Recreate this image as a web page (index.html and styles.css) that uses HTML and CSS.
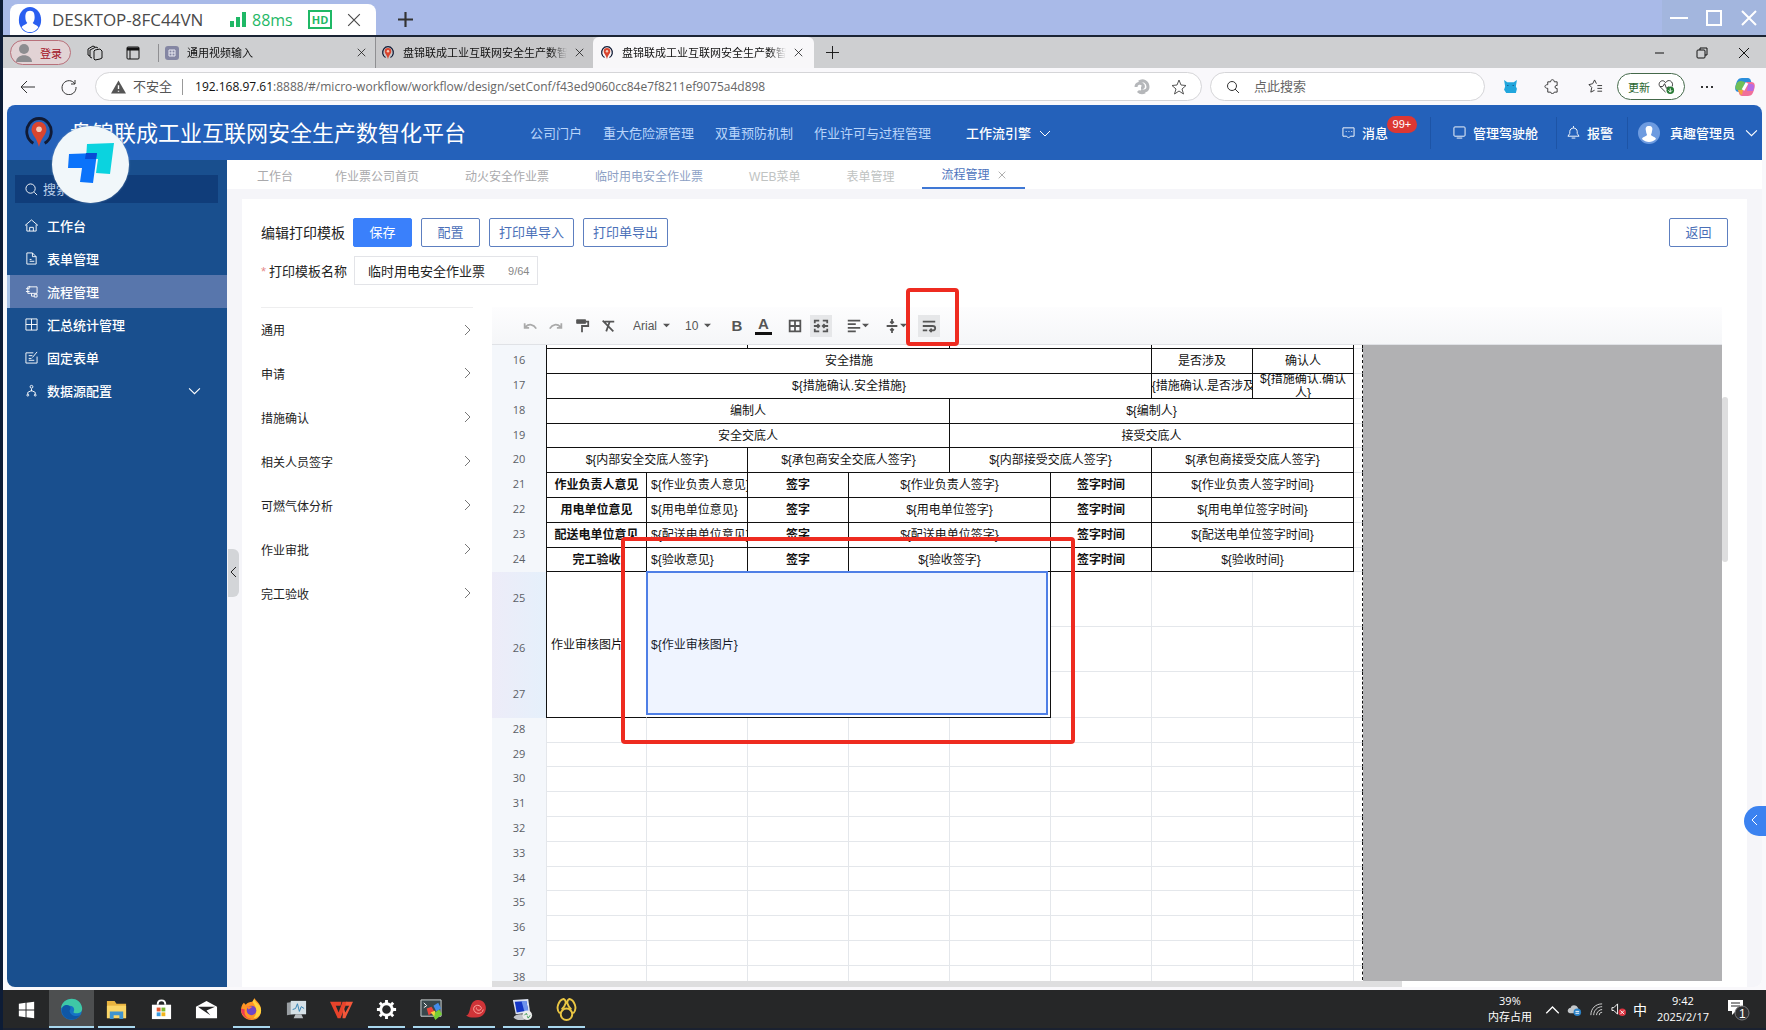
FILE: index.html
```html
<!DOCTYPE html>
<html lang="zh">
<head>
    <meta charset="UTF-8">
    <meta name="viewport" content="width=device-width, initial-scale=1.0">
    <title>盘锦联成工业互联网安全生产数智化平台</title>
    <link rel="stylesheet" href="styles.css">
</head>
<body>
    <svg class="sprite" aria-hidden="true">
        <symbol id="close" viewBox="0 0 12 12"><path d="M1 1l10 10M11 1L1 11"/></symbol>
        <symbol id="plus" viewBox="0 0 14 14"><path d="M7 0v14M0 7h14"/></symbol>
        <symbol id="down" viewBox="0 0 12 12"><path d="M1 4l5 5 5-5"/></symbol>
        <symbol id="right" viewBox="0 0 12 12"><path d="M4 1l5 5-5 5"/></symbol>
        <symbol id="caret" viewBox="0 0 8 8"><path d="M0 2h8L4 6z" fill="currentColor" stroke="none"/></symbol>
        <symbol id="pin" viewBox="0 0 28 34">
            <path d="M8 28A13 14 0 1 1 20 28" stroke="#101a35" stroke-width="3"/>
            <path d="M14 5a8 8 0 0 1 8 8c0 6-6 9-8 19-2-10-8-13-8-19a8 8 0 0 1 8-8z" fill="#d9452f" stroke="none"/>
            <circle cx="14" cy="13" r="3" fill="#f6c9b8" stroke="none"/>
        </symbol>
    </svg>

    <!-- 远程桌面窗口 -->
    <header class="remote-bar">
        <div class="remote-tab">
            <svg class="remote-user" viewBox="0 0 26 28"><ellipse cx="13" cy="14" rx="12" ry="14" fill="#2a5ff0" stroke="none"/><path d="M13 4c4 0 5 3 5 7 0 3-1 5-2 6 0 2 5 2 6 5-3 4-6 5-9 5s-6-1-9-5c1-3 6-3 6-5-1-1-2-3-2-6 0-4 1-7 5-7z" fill="#fff" stroke="none"/></svg>
            <span class="remote-name">DESKTOP-8FC44VN</span>
            <svg class="signal" viewBox="0 0 16 15"><path d="M0 9h4v6H0zM6 5h4v10H6zM12 0h4v15h-4z" fill="#1fb866" stroke="none"/></svg>
            <span class="ping">88ms</span>
            <span class="hd">HD</span>
            <svg class="remote-close"><use href="#close"/></svg>
        </div>
        <svg class="remote-add"><use href="#plus"/></svg>
        <div class="remote-controls">
            <svg viewBox="0 0 18 18"><path d="M0 9h18"/></svg>
            <svg viewBox="0 0 18 18"><path d="M2 2h14v14H2z"/></svg>
            <svg viewBox="0 0 18 18"><path d="M2 2l14 14M16 2L2 16"/></svg>
        </div>
    </header>

    <!-- 浏览器标签 -->
    <div class="browser-tabs">
        <button class="login"><svg viewBox="0 0 16 18"><circle cx="8" cy="5" r="5" fill="#8d8d90" stroke="none"/><path d="M0 18c0-9 16-9 16 0z" fill="#8d8d90" stroke="none"/></svg>登录</button>
        <svg class="b-icon spaces" viewBox="0 0 16 16"><path d="M8 5l5-1 2 2v7l-2 1-5 1-1-1V6z"/><path d="M5 13l-2-1V5l6-3 2 1M3 11l-2-1V4l5-3 2 1"/></svg>
        <svg class="b-icon side" viewBox="0 0 16 16"><rect x="2" y="2" width="12" height="12" rx="1"/><path d="M2 4h12" stroke-width="3"/><path d="M5 5v9"/></svg>
        <div class="b-tab first">
            <svg class="fav" viewBox="0 0 14 14"><rect width="14" height="14" rx="3" fill="#8486a3" stroke="none"/><path d="M4 4h6v6H4zM7 4v6M4 7h6" stroke="#e9e9f2"/></svg>
            <span>通用视频输入</span><svg class="x"><use href="#close"/></svg>
        </div>
        <div class="b-tab second">
            <svg class="fav"><use href="#pin"/></svg>
            <span>盘锦联成工业互联网安全生产数智化平台</span><svg class="x"><use href="#close"/></svg>
        </div>
        <div class="b-tab current">
            <svg class="fav"><use href="#pin"/></svg>
            <span>盘锦联成工业互联网安全生产数智化平台</span><svg class="x"><use href="#close"/></svg>
        </div>
        <svg class="b-add"><use href="#plus"/></svg>
        <div class="b-controls">
            <svg viewBox="0 0 12 12"><path d="M1 6h9"/></svg>
            <svg viewBox="0 0 12 12"><rect x="1" y="3" width="8" height="8" rx="1"/><path d="M4 3V1h7v7H9"/></svg>
            <svg viewBox="0 0 12 12"><path d="M1 1l10 10M11 1L1 11"/></svg>
        </div>
    </div>

    <!-- 地址栏 -->
    <div class="address-row">
        <svg class="nav-icon back" viewBox="0 0 16 16"><path d="M15 8H1M7 2L1 8l6 6"/></svg>
        <svg class="nav-icon" viewBox="0 0 16 16"><path d="M14 5A7 7 0 1 0 15 8M14 1v4h-4"/></svg>
        <div class="url-box">
            <svg class="warn" viewBox="0 0 16 14"><path d="M8 0l8 14H0z" fill="#555" stroke="none"/><path d="M8 5v4M8 11v1" stroke="#fff" stroke-width="1.500"/></svg>
            <span class="unsafe">不安全</span>
            <div class="url" role="textbox" aria-label="地址" contenteditable="true" spellcheck="false"><b>192.168.97.61</b>:8888/#/micro-workflow/workflow/design/setConf/f43ed9060cc84e7f8211ef9075a4d898</div>
            <svg class="swirl" viewBox="0 0 16 16"><path d="M2 8c0-4 5-5 7-2 1 2 0 3-2 3M5 3c4-3 9 0 9 5 0 4-5 5-7 3M11 13c-2 1-5 1-7-1" stroke="#b5b7ba" stroke-width="3"/></svg>
            <svg class="star" viewBox="0 0 16 16"><path d="M8 1l2 5 5 .5-4 3.500 1.500 5L8 12l-4.500 3L5 10 1 6.500 6 6z"/></svg>
        </div>
        <label class="quick-search">
            <svg viewBox="0 0 14 14"><circle cx="6" cy="6" r="4.500"/><path d="M9 9l4 4"/></svg>
            <input type="text" placeholder="点此搜索" aria-label="点此搜索">
        </label>
        <svg class="ext" viewBox="0 0 14 14"><path d="M1 1l3 2h6l3-2-1 6 1 2-1 4H3L1 10l1-3z" fill="#21a6dd" stroke="none"/><path d="M4 6h1M9 6h1" stroke="#174b7a"/></svg>
        <svg class="ext" viewBox="0 0 16 16"><path d="M4 3h3c0-3 4-3 4 0h3v4c-3-1-3 4 0 3v4h-3c0 2-4 2-4 0H4v-4c-4 0-4-4 0-4z"/></svg>
        <svg class="ext split" viewBox="0 0 16 16"><path d="M9 5L7 1 5 5 1 6l3 3-1 5 4-2M10 7h5M10 10h5M10 13h5"/></svg>
        <button class="update">更新<svg viewBox="0 0 18 18"><path d="M8 15L2 9c-3-4 3-9 6-4 3-5 9-1 7 4M2 9h3l2-3 2 5 2-2"/><circle cx="13" cy="13" r="4" fill="#287a35" stroke="none"/><path d="M13 11v4M11 13l2 2 2-2" stroke="#fff"/></svg></button>
        <svg class="dots" viewBox="0 0 14 4"><path d="M1 2h2M6 2h2M11 2h2" stroke-width="2"/></svg>
        <svg class="copilot" viewBox="0 0 22 22"><path d="M8 2h6c3 0 3 4 4 6h-5l-3 8H5c-5 0-4-5-3-8s2-6 6-6z" fill="#2b8edb" stroke="none"/><path d="M2 9c1-3 2-4 5-4l4 1-2 8H4c-3 0-3-3-2-5z" fill="#70bf57" stroke="none"/><path d="M14 20H8c-3 0-3-4-4-6h5l3-8h5c5 0 4 5 3 8s-2 6-6 6z" fill="#f0709a" stroke="none"/><path d="M14 8h4c3 1 2 4 1 7h-6z" fill="#b76be3" stroke="none"/><path d="M4 14h5l-1 5c-2-1-3-2-4-5z" fill="#f3a53c" stroke="none"/><path d="M9 14l4-7" stroke="#fff" stroke-width="3"/></svg>
    </div>

    <main class="app">
        <div class="app-header">
            <svg class="app-logo"><use href="#pin"/></svg>
            <h1>盘锦联成工业互联网安全生产数智化平台</h1>
            <nav class="top-nav">
                <a href="#">公司门户</a>
                <a href="#">重大危险源管理</a>
                <a href="#">双重预防机制</a>
                <a href="#">作业许可与过程管理</a>
                <a href="#" class="on">工作流引擎<svg><use href="#down"/></svg></a>
            </nav>
            <div class="user-nav">
                <a href="#" class="msg"><svg viewBox="0 0 14 14"><path d="M1 2h12v9H9l-2 2-2-2H1zM4 6h1M7 6h1M10 6h1"/></svg>消息<em>99+</em></a>
                <a href="#" class="cockpit"><svg viewBox="0 0 14 14"><rect x="1" y="1" width="12" height="10" rx="1"/><path d="M4 13h6"/></svg>管理驾驶舱</a>
                <a href="#" class="alarm"><svg viewBox="0 0 14 14"><path d="M1 11h12L11 8V6c0-5-8-5-8 0v2zM5 13h4M7 0v2"/></svg>报警</a>
                <a href="#" class="admin"><svg class="face" viewBox="0 0 22 22"><circle cx="11" cy="11" r="11" fill="#6d9be0" stroke="none"/><path d="M11 4c3 0 4 2 3 5 0 2-1 3-1 4 1 2 4 1 5 4-4 4-10 4-14 0 1-3 4-2 5-4 0-1-1-2-1-4-1-3 0-5 3-5z" fill="#fff" stroke="none"/></svg>真趣管理员<svg><use href="#down"/></svg></a>
            </div>
        </div>

        <div class="app-body">
            <aside class="sidebar">
                <label class="side-search"><svg viewBox="0 0 14 14"><circle cx="6" cy="6" r="5"/><path d="M10 10l3 3"/></svg><input type="text" placeholder="搜索" aria-label="搜索"></label>
                <a href="#"><svg viewBox="0 0 14 14"><path d="M0 7l7-6 7 6M2 6v7h10V6M5 13V9h4v4"/></svg>工作台</a>
                <a href="#"><svg viewBox="0 0 14 14"><path d="M2 1h6l4 4v8H2zM8 1v4h4M5 8h2M5 10h5"/></svg>表单管理</a>
                <a href="#" class="on"><svg viewBox="0 0 14 14"><path d="M3 2h10v7H3zM1 4h4M1 7h4M7 9v3h3M5 1v2M10 10h3v3h-3z"/></svg>流程管理</a>
                <a href="#"><svg viewBox="0 0 14 14"><path d="M1 1h12v12H1zM7 1v12M1 7h12"/></svg>汇总统计管理</a>
                <a href="#"><svg viewBox="0 0 14 14"><path d="M9 2H1v11h12V6M4 5h4M4 8h3M4 10h6M8 7l5-6"/></svg>固定表单</a>
                <a href="#"><svg viewBox="0 0 14 14"><circle cx="7" cy="3" r="1.500"/><path d="M7 5v3M3 11V9l4-2 4 2v2"/><circle cx="3" cy="12" r="1"/><circle cx="11" cy="12" r="1"/></svg>数据源配置<svg class="more"><use href="#down"/></svg></a>
            </aside>

            <div class="work">
                <nav class="page-tabs">
                    <a href="#" class="home">工作台</a>
                    <a href="#">作业票公司首页</a>
                    <a href="#">动火安全作业票</a>
                    <a href="#" class="visited">临时用电安全作业票</a>
                    <a href="#" class="faded">WEB菜单</a>
                    <a href="#" class="faded">表单管理</a>
                    <a href="#" class="on">流程管理<svg><use href="#close"/></svg></a>
                </nav>

                <div class="panel-wrap">
                    <button class="fold" aria-label="收起"><svg viewBox="0 0 12 12"><path d="M8 1L3 6l5 5"/></svg></button>
                    <section class="panel">
                        <div class="actions">
                            <h2>编辑打印模板</h2>
                            <button class="btn primary">保存</button>
                            <button class="btn">配置</button>
                            <button class="btn">打印单导入</button>
                            <button class="btn">打印单导出</button>
                            <button class="btn return">返回</button>
                        </div>
                        <div class="name-row">
                            <label for="tplName"><i>*</i>打印模板名称</label>
                            <div class="name-box"><input type="text" id="tplName" value="临时用电安全作业票"><span>9/64</span></div>
                        </div>

                        <div class="editor">
                            <div class="fields">
                                <button>通用<svg><use href="#right"/></svg></button>
                                <button>申请<svg><use href="#right"/></svg></button>
                                <button>措施确认<svg><use href="#right"/></svg></button>
                                <button>相关人员签字<svg><use href="#right"/></svg></button>
                                <button>可燃气体分析<svg><use href="#right"/></svg></button>
                                <button>作业审批<svg><use href="#right"/></svg></button>
                                <button>完工验收<svg><use href="#right"/></svg></button>
                            </div>

                            <div class="sheet">
                                <div class="toolbar">
                                    <button class="dim" aria-label="撤销"><svg viewBox="0 0 18 18"><path d="M3 6v5h5M4 10c4-4 9-3 12 2" stroke-width="2"/></svg></button>
                                    <button class="dim" aria-label="重做"><svg viewBox="0 0 18 18"><path d="M15 6v5h-5M14 10C10 6 5 7 2 12" stroke-width="2"/></svg></button>
                                    <button aria-label="格式刷"><svg viewBox="0 0 18 18"><path d="M3 2h10v4H3z" fill="#555"/><path d="M13 4h3v5H9v7" stroke-width="2"/></svg></button>
                                    <button aria-label="清除格式"><svg viewBox="0 0 18 18"><path d="M5 4h11M11 4L7 15M3 3l12 12" stroke-width="2"/></svg></button>
                                    <label class="drop font"><select aria-label="字体"><option>Arial</option></select><svg><use href="#caret"/></svg></label>
                                    <label class="drop size"><select aria-label="字号"><option>10</option></select><svg><use href="#caret"/></svg></label>
                                    <button class="bold" aria-label="加粗">B</button>
                                    <button class="color" aria-label="文字颜色">A</button>
                                    <button class="border-btn" aria-label="边框"><svg viewBox="0 0 18 18"><path d="M3 3h12v12H3zM9 3v12M3 9h12" stroke-width="2"/></svg></button>
                                    <button class="pressed" aria-label="合并"><svg viewBox="0 0 18 18"><path d="M7 3H2v3M11 3h5v3M7 15H2v-3M11 15h5v-3M1 9h6M17 9h-6M5 7l2 2-2 2M13 7l-2 2 2 2" stroke-width="2"/></svg></button>
                                    <button class="align" aria-label="水平对齐"><svg viewBox="0 0 18 18"><path d="M2 3h14M2 7h9M2 11h14M2 15h9" stroke-width="2"/></svg><svg class="tri"><use href="#caret"/></svg></button>
                                    <button class="valign" aria-label="垂直对齐"><svg viewBox="0 0 18 18"><path d="M3 9h12M9 1v4M9 17v-4M7 4l2 2 2-2M7 14l2-2 2 2" stroke-width="2"/></svg><svg class="tri"><use href="#caret"/></svg></button>
                                    <button class="pressed wrap" aria-label="自动换行"><svg viewBox="0 0 18 18"><path d="M2 4h14M2 9h11c4 0 4 5 0 5h-3M2 14h5M12 12l-2 2 2 2" stroke-width="2"/></svg></button>
                                    <div class="mark mark-tool"></div>
                                </div>

                                <div class="grid">
                                    <table>
                                        <colgroup><col class="c-num"><col class="c-thin"><col class="c-wide"><col class="c-wide"><col class="c-wide"><col class="c-wide"><col class="c-wide"><col class="c-wide"><col class="c-wide"><col class="c-end"></colgroup>
                                        <tbody>
                                            <tr class="cut"><th></th><td colspan="2"></td><td colspan="2"></td><td colspan="2"></td><td colspan="2"></td><td class="end"></td></tr>
                                            <tr class="ink"><th>16</th><td colspan="6">安全措施</td><td>是否涉及</td><td>确认人</td><td class="end"></td></tr>
                                            <tr class="ink"><th>17</th><td colspan="6">${措施确认.安全措施}</td><td><div class="clip one">${措施确认.是否涉及}</div></td><td><div class="clip">${措施确认.确认人}</div></td><td class="end"></td></tr>
                                            <tr class="ink"><th>18</th><td colspan="4">编制人</td><td colspan="4">${编制人}</td><td class="end"></td></tr>
                                            <tr class="ink"><th>19</th><td colspan="4">安全交底人</td><td colspan="4">接受交底人</td><td class="end"></td></tr>
                                            <tr class="ink"><th>20</th><td colspan="2">${内部安全交底人签字}</td><td colspan="2">${承包商安全交底人签字}</td><td colspan="2">${内部接受交底人签字}</td><td colspan="2">${承包商接受交底人签字}</td><td class="end"></td></tr>
                                            <tr class="ink"><th>21</th><td class="b">作业负责人意见</td><td class="l">${作业负责人意见}</td><td class="b">签字</td><td colspan="2">${作业负责人签字}</td><td class="b">签字时间</td><td colspan="2">${作业负责人签字时间}</td><td class="end"></td></tr>
                                            <tr class="ink"><th>22</th><td class="b">用电单位意见</td><td class="l">${用电单位意见}</td><td class="b">签字</td><td colspan="2">${用电单位签字}</td><td class="b">签字时间</td><td colspan="2">${用电单位签字时间}</td><td class="end"></td></tr>
                                            <tr class="ink"><th>23</th><td class="b">配送电单位意见</td><td class="l">${配送电单位意见}</td><td class="b">签字</td><td colspan="2">${配送电单位签字}</td><td class="b">签字时间</td><td colspan="2">${配送电单位签字时间}</td><td class="end"></td></tr>
                                            <tr class="ink"><th>24</th><td class="b">完工验收</td><td class="l">${验收意见}</td><td class="b">签字</td><td colspan="2">${验收签字}</td><td class="b">签字时间</td><td colspan="2">${验收时间}</td><td class="end"></td></tr>
                                            <tr class="picked tall"><th>25</th><td class="l dark title" rowspan="3">作业审核图片</td><td class="l dark chosen" colspan="4" rowspan="3">${作业审核图片}<div class="selection"></div></td><td></td><td></td><td></td><td class="end"></td></tr>
                                            <tr class="picked mid"><th>26</th><td></td><td></td><td></td><td class="end"></td></tr>
                                            <tr class="picked last"><th>27</th><td></td><td></td><td></td><td class="end"></td></tr>
                                            <tr><th>28</th><td></td><td></td><td></td><td></td><td></td><td></td><td></td><td></td><td class="end"></td></tr>
                                            <tr><th>29</th><td></td><td></td><td></td><td></td><td></td><td></td><td></td><td></td><td class="end"></td></tr>
                                            <tr><th>30</th><td></td><td></td><td></td><td></td><td></td><td></td><td></td><td></td><td class="end"></td></tr>
                                            <tr><th>31</th><td></td><td></td><td></td><td></td><td></td><td></td><td></td><td></td><td class="end"></td></tr>
                                            <tr><th>32</th><td></td><td></td><td></td><td></td><td></td><td></td><td></td><td></td><td class="end"></td></tr>
                                            <tr><th>33</th><td></td><td></td><td></td><td></td><td></td><td></td><td></td><td></td><td class="end"></td></tr>
                                            <tr><th>34</th><td></td><td></td><td></td><td></td><td></td><td></td><td></td><td></td><td class="end"></td></tr>
                                            <tr><th>35</th><td></td><td></td><td></td><td></td><td></td><td></td><td></td><td></td><td class="end"></td></tr>
                                            <tr><th>36</th><td></td><td></td><td></td><td></td><td></td><td></td><td></td><td></td><td class="end"></td></tr>
                                            <tr><th>37</th><td></td><td></td><td></td><td></td><td></td><td></td><td></td><td></td><td class="end"></td></tr>
                                            <tr><th>38</th><td></td><td></td><td></td><td></td><td></td><td></td><td></td><td></td><td class="end"></td></tr>
                                        </tbody>
                                    </table>
                                    <div class="outside"></div>
                                    <div class="mark mark-cell"></div>
                                </div>
                                <div class="h-scroll"></div>
                                <div class="v-scroll"></div>
                            </div>
                        </div>
                    </section>
                </div>
            </div>
        </div>
    </main>

    <footer class="taskbar">
        <div class="tasks">
            <button aria-label="开始"><svg viewBox="0 0 24 24"><path d="M4 6l7-1v7H4zM12 5l8-1v8h-8zM4 13h7v7l-7-1zM12 13h8v8l-8-1z" fill="#fff"/></svg></button>
            <button class="open active" aria-label="Edge"><svg viewBox="0 0 24 24"><circle cx="12" cy="12" r="11" fill="#1673c5"/><path d="M1 11C2-2 21-3 23 10c1 6-6 7-9 5 2-4 0-7-4-7s-8 1-9 3z" fill="#3fc8a6"/><path d="M3 9c5-4 10 0 7 4 0 5 6 7 11 5-5 8-20 5-19-6z" fill="#0f57a5"/></svg></button>
            <button class="open" aria-label="文件"><svg viewBox="0 0 24 24"><path d="M2 3h8l2 3h10v15H2z" fill="#e9b440"/><path d="M2 8h20v13H2z" fill="#fbd667"/><path d="M5 14h14v8h-4v-4H9v4H5z" fill="#3f93cf"/></svg></button>
            <button aria-label="商店"><svg viewBox="0 0 24 24"><path d="M2 7h20v15H2z" fill="#fff"/><path d="M8 7c0-6 8-6 8 0" stroke="#fff" stroke-width="2"/><path d="M7 10h4v4H7z" fill="#e5542e"/><path d="M12 10h4v4h-4z" fill="#7cb82f"/><path d="M7 15h4v4H7z" fill="#3a9be0"/><path d="M12 15h4v4h-4z" fill="#f3b51d"/></svg></button>
            <button aria-label="邮件"><svg viewBox="0 0 24 24"><path d="M1 9l11-6 11 6v12H1z" fill="#fff"/><path d="M3 9h18l-9 4 4 5-9-6z" fill="#252526"/></svg></button>
            <button class="open" aria-label="Firefox"><svg viewBox="0 0 24 24"><path d="M4 5l2 2c2-2 4-3 7-3l2-4c1 3 7 5 7 13 0 6-4 10-10 10S1 18 1 13c0-3 1-6 3-8z" fill="#ff9525"/><path d="M15 1c1 5 7 5 7 12 0 5-4 8-8 8 5-5 3-12-1-17z" fill="#ffd33d"/><path d="M1 11c0 7 6 12 12 11-7 0-9-5-8-10z" fill="#ee3d55"/><circle cx="12" cy="13" r="5" fill="#7046c6"/><path d="M6 8l7 1-4 3z" fill="#ff8132"/></svg></button>
            <button aria-label="性能监视"><svg viewBox="0 0 24 24"><path d="M2 5l13-2v13l-13 2z" fill="#999ea2"/><path d="M6 3h16v14H6z" fill="#d6e1e7"/><path d="M8 12l3-1 2-5 2 8 2-5 3 2" stroke="#3182b4"/><path d="M11 17h6l2 4H9z" fill="#b8bdc1"/></svg></button>
            <button aria-label="WPS"><svg viewBox="0 0 24 24"><path d="M0 4h12l-1 4H6l3 7 4-11h5l-7 17H8z" fill="#e8432b"/><path d="M14 9l2 6 4-7h-4l1-4h7l-8 17h-3z" fill="#f4573a"/></svg></button>
            <button class="open" aria-label="设置"><svg viewBox="0 0 24 24"><circle cx="12" cy="12" r="6" stroke="#fff" stroke-width="3"/><path d="M12 2v4M12 18v4M2 12h4M18 12h4M5 5l3 3M16 16l3 3M19 5l-3 3M5 19l3-3" stroke="#fff" stroke-width="3"/></svg></button>
            <button class="open" aria-label="终端"><svg viewBox="0 0 24 24"><path d="M1 2h21v17H1z" fill="#39474c" stroke="#d2d7d8"/><path d="M4 5l3 3-3 2" stroke="#fff"/><path d="M7 11l5-2 3 5-6 4z" fill="#ee453c"/><path d="M14 8l5-3 3 6-5 3z" fill="#438cea"/><path d="M13 17l7-5 3 5-7 6z" fill="#76cf36"/><path d="M11 15l5-2-1 6z" fill="#f6d63d"/></svg></button>
            <button class="open" aria-label="螺旋"><svg viewBox="0 0 24 24"><path d="M1 18c6 0 2-15 12-16 11-1 12 16 1 18-7 1-11 0-13-2z" fill="#cf3438"/><path d="M19 12c-1 6-10 5-10-1 1-5 8-4 8 0-1 3-6 2-5-1" stroke="#ffaaa2"/></svg></button>
            <button class="open" aria-label="远程桌面"><svg viewBox="0 0 24 24"><path d="M3 2l16-1 2 14-15 2z" fill="#dce2f2"/><path d="M5 4l12-1 2 10-12 2z" fill="#1436c7"/><path d="M12 3l5 0 2 10-4 1z" fill="#6d92ed"/><ellipse cx="11" cy="20" rx="7" ry="3" fill="#c1c4c9"/><circle cx="18" cy="18" r="5" fill="#ececec"/><path d="M15 18l2-2 1 2M21 18l-2 3-1-2" stroke="#369550"/></svg></button>
            <button class="open" aria-label="助手"><svg viewBox="0 0 24 24"><ellipse cx="12" cy="17" rx="6" ry="6" stroke="#eac643" stroke-width="2"/><path d="M5 16C0 11 4 2 9 1c4 2 2 7-2 11M19 16c5-5 1-14-4-15-4 2-2 7 2 11" stroke="#eac643" stroke-width="2"/></svg></button>
        </div>
        <div class="tray">
            <div class="two-lines memory">39%<br>内存占用</div>
            <svg class="t-up" viewBox="0 0 12 12"><path d="M1 9l5-5 5 5" stroke="#fff"/></svg>
            <svg viewBox="0 0 16 16"><path d="M3 12c-4-1-2-6 1-6 1-4 7-3 8 1l2 5z" fill="#c3c7ca"/><circle cx="11" cy="11" r="4" fill="#2a82c8"/><path d="M9 10h4M9 12h4" stroke="#fff"/></svg>
            <svg viewBox="0 0 16 16"><path d="M2 14C2 7 7 2 14 2M5 14c0-5 4-9 9-9M8 14c0-3 3-6 6-6M11 14c0-2 1-3 3-3" stroke="#d7d7d7"/></svg>
            <svg viewBox="0 0 16 16"><path d="M1 6h2l4-4v11l-4-4H1z" stroke="#fff"/><circle cx="12" cy="11" r="4" fill="#dc3340"/><path d="M10 9l4 4M14 9l-4 4" stroke="#fff"/></svg>
            <span class="ime">中</span>
            <div class="two-lines clock">9:42<br>2025/2/17</div>
            <svg class="notice" viewBox="0 0 24 24"><path d="M1 3h15v11H9l-4 4v-4H1z" fill="#fff"/><path d="M4 6h9M4 9h9" stroke="#252526"/><circle cx="15" cy="16" r="7" fill="#303032" stroke="#77777a"/><text x="12" y="21" fill="#fff">1</text></svg>
        </div>
    </footer>

    <!-- 悬浮按钮 -->
    <button class="todesk" aria-label="ToDesk"><svg viewBox="0 0 46 40"><path d="M19 1l27-1-4 31-14-1 2-14H18z" fill="#0bd3df"/><path d="M1 11l28-1-4 30-13-1 2-14H0z" fill="#0b73fa"/><path d="M18 10h11l-1 6H17z" fill="#084bd4"/></svg></button>
    <button class="drawer" aria-label="展开"><svg viewBox="0 0 12 12"><path d="M8 1L3 6l5 5"/></svg></button>
</body>
</html>
```
FILE: styles.css
```css
* {
    box-sizing: border-box;
}
body {
    margin: 0;
    height: 100vh;
    min-width: 1400px;
    display: flex;
    flex-direction: column;
    overflow: hidden;
    position: relative;
    border-left: 3px solid #0d1c36;
    background: #f9f8fb;
    font-family: "Liberation Sans", "Noto Sans CJK SC", sans-serif;
    font-size: 12px;
    color: #222;
}
svg {
    fill: none;
    stroke: currentColor;
    flex: none;
    width: 12px;
    height: 12px;
}
button, input, select {
    font: inherit;
    color: inherit;
    border: 0;
    padding: 0;
    background: none;
    outline: none;
}
a {
    color: inherit;
    text-decoration: none;
}
.sprite {
    position: absolute;
    width: 0;
    height: 0;
}

/* 远程桌面 */
.remote-bar {
    flex: none;
    display: flex;
    align-items: center;
    height: 37px;
    border-bottom: 2px solid #1b2434;
    background: #a9bae8;
    font-family: "Open Sans", sans-serif;
}
.remote-tab {
    display: flex;
    align-items: center;
    align-self: flex-end;
    width: 366px;
    height: 31px;
    margin-left: 7px;
    padding-left: 7px;
    border-radius: 8px 8px 0 0;
    background: #fff;
    color: #4a4a4a;
}
.remote-user {
    width: 26px;
    height: 26px;
}
.remote-name {
    width: 178px;
    margin-left: 9px;
    font-size: 17px;
    line-height: 24px;
    white-space: nowrap;
}
.signal {
    width: 16px;
    height: 15px;
}
.ping {
    width: 62px;
    padding-left: 6px;
    font-size: 16px;
    color: #1fb866;
}
.hd {
    width: 24px;
    margin-right: 15px;
    border: 2px solid #1fb866;
    font-size: 11px;
    font-weight: bold;
    line-height: 15px;
    text-align: center;
    color: #1fb866;
}
.remote-close {
    width: 14px;
    height: 14px;
}
.remote-add {
    width: 15px;
    height: 15px;
    margin: 4px 0 0 22px;
    color: #333;
    stroke-width: 2;
}
.remote-controls {
    display: flex;
    align-items: center;
    gap: 17px;
    height: 35px;
    margin-left: auto;
    padding: 0 8px;
    background: #a3b6de;
    color: #fff;
}
.remote-controls svg {
    width: 18px;
    height: 18px;
    stroke-width: 2;
}

/* 浏览器标签 */
.browser-tabs {
    flex: none;
    display: flex;
    align-items: center;
    height: 31px;
    background: #cecfd1;
    color: #111;
}
.login {
    display: flex;
    align-items: center;
    gap: 8px;
    width: 61px;
    height: 25px;
    margin-left: 7px;
    padding-left: 5px;
    border: 1px solid #b8707a;
    border-radius: 13px;
    background: #e2d3d5;
    font-size: 11px;
    color: #a3121f;
}
.login svg {
    width: 16px;
    height: 18px;
}
.b-icon {
    width: 16px;
    height: 16px;
    margin-left: 16px;
}
.side {
    margin-left: 22px;
}
.b-tab {
    display: flex;
    align-items: center;
    height: 31px;
}
.b-tab span {
    width: 164px;
    margin: 0 8px;
    overflow: hidden;
    white-space: nowrap;
    font-size: 11px;
    line-height: 16px;
    -webkit-mask-image: linear-gradient(90deg, #000 90%, transparent);
}
.b-tab .x {
    width: 9px;
    height: 9px;
}
.fav {
    width: 14px;
    height: 14px;
}
.first {
    height: 18px;
    margin-left: 17px;
    padding: 0 9px 0 6px;
    border-left: 1px solid #8f8f92;
}
.b-tab.first span {
    width: 162px;
}
.second {
    padding: 0 9px 0 6px;
    background: linear-gradient(90deg, #8f8f92 1px, #c8c8ca 1px);
}
.current {
    padding: 0 11px 0 7px;
    border-radius: 6px 6px 0 0;
    background: #f8f7f9;
}
.b-add {
    width: 13px;
    height: 13px;
    margin-left: 12px;
}
.b-controls {
    display: flex;
    gap: 30px;
    margin-left: auto;
    padding-right: 16px;
}

/* 地址栏 */
.address-row {
    flex: none;
    display: flex;
    align-items: center;
    height: 37px;
    background: #f9f8fb;
    color: #333;
}
.nav-icon {
    width: 16px;
    height: 16px;
    margin-left: 25px;
}
.back {
    margin-left: 17px;
}
.url-box {
    flex: 1;
    display: flex;
    align-items: center;
    height: 29px;
    margin-left: 18px;
    padding: 0 14px 0 15px;
    border: 1px solid #d5d5d8;
    border-radius: 15px;
    background: #fff;
}
.warn {
    width: 15px;
    height: 14px;
}
.unsafe {
    margin: 0 10px 0 7px;
    font-size: 13px;
    line-height: 18px;
    color: #555;
}
.url {
    flex: 1;
    padding-left: 12px;
    border-left: 1px solid #999;
    font-family: "Open Sans", sans-serif;
    font-size: 12px;
    line-height: 16px;
    white-space: nowrap;
    outline: none;
    color: #666;
}
.url b {
    font-weight: normal;
    color: #111;
}
.swirl, .star {
    width: 16px;
    height: 16px;
    margin-left: 21px;
    color: #555;
}
.quick-search {
    display: flex;
    align-items: center;
    gap: 14px;
    width: 275px;
    height: 29px;
    margin: 0 18px 0 8px;
    padding-left: 15px;
    border: 1px solid #d5d5d8;
    border-radius: 15px;
    background: #fff;
}
.quick-search svg {
    width: 14px;
    height: 14px;
}
.quick-search input {
    width: 200px;
    font-size: 13px;
}
.quick-search input::placeholder {
    color: #666;
}
.ext {
    width: 15px;
    height: 15px;
    margin-right: 26px;
}
.split {
    margin: 0 14px 0 3px;
}
.update {
    display: flex;
    align-items: center;
    justify-content: space-between;
    width: 68px;
    height: 27px;
    padding: 0 9px 0 10px;
    border: 1px solid #44694a;
    border-radius: 14px;
    background: #fff;
    font-size: 11px;
    color: #28652f;
}
.update svg {
    width: 17px;
    height: 17px;
    color: #333;
}
.dots {
    width: 14px;
    height: 4px;
    margin: 0 20px 0 15px;
}
.copilot {
    width: 22px;
    height: 22px;
    margin-right: 10px;
}

/* 平台 */
.app {
    flex: 1;
    min-height: 0;
    display: flex;
    flex-direction: column;
    margin: 0 4px 3px 4px;
    border-radius: 8px;
    overflow: hidden;
    background: #fff;
}
.app-header {
    flex: none;
    display: flex;
    align-items: center;
    height: 55px;
    padding: 0 4px 0 18px;
    background: #2461ba;
    color: #fff;
}
.app-logo {
    width: 28px;
    height: 32px;
}
h1 {
    width: 460px;
    margin: 0 0 0 17px;
    padding-top: 3px;
    font-size: 22px;
    font-weight: normal;
    line-height: 30px;
    white-space: nowrap;
}
.top-nav {
    display: flex;
    gap: 21px;
    font-size: 13px;
    color: #b9d5fa;
    white-space: nowrap;
}
.top-nav .on {
    display: flex;
    align-items: center;
    gap: 8px;
    margin-left: 14px;
    font-weight: 500;
    color: #fff;
}
.user-nav {
    display: flex;
    align-items: center;
    margin-left: auto;
    font-size: 13px;
    font-weight: 500;
    white-space: nowrap;
}
.user-nav a {
    display: flex;
    align-items: center;
    gap: 7px;
    height: 32px;
    border-right: 1px solid #1d54a6;
}
.user-nav svg {
    width: 13px;
    height: 13px;
}
.msg {
    position: relative;
    padding-right: 42px;
}
.msg em {
    position: absolute;
    left: 45px;
    top: -1px;
    width: 30px;
    border-radius: 9px;
    background: #dc3733;
    font-size: 11px;
    font-style: normal;
    font-weight: normal;
    line-height: 17px;
    text-align: center;
}
.cockpit {
    padding: 0 18px 0 22px;
}
.alarm {
    padding: 0 14px 0 10px;
}
.user-nav .admin {
    padding-left: 10px;
    gap: 10px;
    border: 0;
}
.user-nav .face {
    width: 22px;
    height: 22px;
}
.app-body {
    flex: 1;
    min-height: 0;
    display: flex;
}
.sidebar {
    flex: none;
    width: 220px;
    background: #194f8e;
    color: #fff;
}
.side-search {
    display: flex;
    align-items: center;
    gap: 5px;
    height: 28px;
    margin: 15px 9px 6px 8px;
    padding-left: 10px;
    background: #103d7a;
    font-size: 13px;
}
.side-search svg, .sidebar a svg {
    width: 13px;
    height: 13px;
}
.side-search input {
    width: 150px;
}
.side-search input::placeholder {
    color: #b8cce6;
}
.sidebar a {
    display: flex;
    align-items: center;
    gap: 9px;
    height: 33px;
    padding: 0 26px 0 18px;
    font-size: 13px;
    font-weight: 500;
}
.sidebar .on {
    border-left: 3px solid #a9c2e6;
    padding-left: 15px;
    background: #5876ac;
}
.sidebar .more {
    margin-left: auto;
}
.work {
    flex: 1;
    min-width: 0;
    display: flex;
    flex-direction: column;
    background: #f5f5f9;
}
.page-tabs {
    flex: none;
    display: flex;
    height: 29px;
    padding-left: 7px;
    background: #fff;
    color: #a9a9ac;
    white-space: nowrap;
}
.page-tabs a {
    padding: 0 23px;
    line-height: 34px;
}
.page-tabs .home {
    padding-right: 19px;
}
.page-tabs .visited {
    color: #8d9fc4;
}
.page-tabs .faded {
    color: #c0c3c2;
}
.page-tabs .on {
    display: flex;
    align-items: center;
    gap: 9px;
    height: 29px;
    margin-left: 5px;
    padding: 3px 19px 0;
    border-bottom: 2px solid #3f78d5;
    line-height: 24px;
    color: #4d74bd;
}
.page-tabs svg {
    width: 8px;
    height: 8px;
    color: #888;
}
.panel-wrap {
    flex: 1;
    min-height: 0;
    display: flex;
    padding: 10px 15px 0 1px;
}
.fold {
    flex: none;
    align-self: center;
    width: 11px;
    height: 48px;
    margin: 0 3px 40px 0;
    border-radius: 0 6px 6px 0;
    background: #d3d5d8;
}
.panel {
    flex: 1;
    min-width: 0;
    display: flex;
    flex-direction: column;
    padding: 19px 19px 0;
    background: #fff;
}

/* 模板表单 */
.actions {
    flex: none;
    display: flex;
    align-items: center;
    gap: 9px;
}
h2 {
    width: 83px;
    margin: 0;
    font-size: 14px;
    font-weight: normal;
    line-height: 20px;
    white-space: nowrap;
}
.btn {
    height: 29px;
    padding: 0 9px;
    min-width: 59px;
    border: 1px solid #5d7fc0;
    border-radius: 2px;
    background: #fff;
    font-size: 13px;
    line-height: 20px;
    color: #4a6fb8;
    cursor: pointer;
}
.primary {
    border-color: #3a80fb;
    background: #3a80fb;
    color: #fff;
}
.return {
    margin-left: auto;
}
.name-row {
    flex: none;
    display: flex;
    align-items: center;
    gap: 7px;
    height: 29px;
    margin-top: 9px;
    font-size: 13px;
}
.name-row i {
    margin-right: 3px;
    font-style: normal;
    color: #e68b8b;
}
.name-box {
    display: flex;
    align-items: center;
    width: 184px;
    height: 29px;
    padding-left: 13px;
    border: 1px solid #e3e4e8;
}
.name-box input {
    width: 140px;
}
.name-box span {
    font-size: 11px;
    color: #888;
}
.editor {
    flex: 1;
    min-height: 0;
    display: flex;
    margin-top: 22px;
}
.fields {
    flex: none;
    width: 231px;
    padding-right: 19px;
}
.fields button {
    display: flex;
    align-items: center;
    justify-content: space-between;
    width: 100%;
    height: 44px;
}
.fields svg {
    color: #777;
}
.fields button:first-child {
    border-top: 1px solid #eeeeef;
}

/* 表格编辑器 */
.sheet {
    position: relative;
    flex: 1;
    min-width: 0;
    display: flex;
    flex-direction: column;
    padding-right: 6px;
}
.toolbar {
    position: relative;
    flex: none;
    display: flex;
    align-items: center;
    height: 38px;
    padding-left: 27px;
    border-bottom: 1px solid #e0e2e6;
    background: linear-gradient(#fdfdfe, #f5f6f8);
    color: #555;
}
.toolbar button {
    display: flex;
    align-items: center;
    justify-content: center;
    width: 22px;
    height: 22px;
    margin-right: 4px;
}
.toolbar svg {
    width: 16px;
    height: 16px;
}
.toolbar .dim {
    color: #aaa;
}
.drop {
    display: flex;
    align-items: center;
    width: 44px;
    margin-left: 10px;
    font-size: 12px;
}
.drop select {
    width: 30px;
    appearance: none;
}
.toolbar .size {
    width: 28px;
    margin-left: 8px;
}
.toolbar .size select {
    width: 19px;
}
.toolbar .drop svg, .toolbar .tri {
    width: 7px;
    height: 7px;
}
.toolbar .bold {
    margin-left: 13px;
    font-size: 15px;
    font-weight: bold;
}
.toolbar .color {
    width: 17px;
    height: 18px;
    margin: 0 12px 0 3px;
    border-bottom: 3px solid #111;
    font-size: 15px;
    font-weight: bold;
    line-height: 14px;
}
.toolbar .pressed {
    background: #e6e7e9;
}
.toolbar .align, .toolbar .valign {
    width: 30px;
    margin-left: 6px;
    margin-right: 0;
}
.toolbar .valign {
    margin-left: 8px;
}
.toolbar .wrap {
    margin-left: 8px;
}
.mark {
    position: absolute;
    border: 4px solid #ee2b20;
    border-radius: 4px;
    pointer-events: none;
}
.mark-tool {
    left: 414px;
    top: -19px;
    width: 53px;
    height: 58px;
    z-index: 2;
}
.mark-cell {
    left: 129px;
    top: 192px;
    width: 454px;
    height: 207px;
}
.grid {
    position: relative;
    flex: 1;
    min-height: 0;
    display: flex;
    align-items: flex-start;
    overflow: hidden;
}
table {
    flex: none;
    width: 871px;
    table-layout: fixed;
    border-collapse: separate;
    border-spacing: 0;
    line-height: 14px;
    color: #111;
}
.c-num {
    width: 55px;
}
.c-wide {
    width: 101px;
}
.c-thin {
    width: 100px;
}
.c-end {
    width: 9px;
}
tr {
    height: 25px;
}
tr:nth-child(5n) {
    height: 24px;
}
.cut, .cut:nth-child(n) {
    height: 4px;
}
.tall:nth-child(n) {
    height: 55px;
}
.mid {
    height: 45px;
}
.last {
    height: 46px;
}
th {
    padding: 0 0 3px;
    border-right: 1px solid #e4e7eb;
    background: #f4f7fb;
    font-family: "Open Sans", sans-serif;
    font-size: 11px;
    font-weight: normal;
    color: #5b6066;
}
.cut th {
    padding: 0;
}
td {
    padding: 0;
    border-right: 1px solid #e4e7eb;
    border-bottom: 1px solid #e4e7eb;
    overflow: hidden;
    white-space: nowrap;
    text-align: center;
}
.ink th, .ink td, .cut th, .cut td, .picked th {
    border-right-color: #111;
}
.ink td, .cut td, .dark {
    border-color: #111;
}
.title {
    border-right-color: transparent;
}
.picked th {
    background: linear-gradient(90deg, #edecf8, #e5f0fb);
}
tr .end {
    border-right: 1px dashed #111;
    border-bottom-color: #e4e7eb;
}
.l {
    padding-left: 4px;
    text-align: left;
}
.b {
    font-weight: bold;
}
.clip {
    display: flex;
    align-items: center;
    justify-content: center;
    height: 24px;
    overflow: hidden;
    white-space: normal;
    word-break: break-all;
}
.one {
    white-space: nowrap;
}
.chosen {
    position: relative;
    overflow: visible;
}
.selection {
    position: absolute;
    inset: -1px 2px 2px -1px;
    border: 2px solid #4f7fe6;
    background: rgba(75, 137, 255, 0.09);
}
.outside {
    flex: 1;
    align-self: stretch;
    background: #b1b1b3;
}
.h-scroll {
    flex: none;
    width: 74%;
    height: 6px;
    background: #dededf;
}
.v-scroll {
    position: absolute;
    right: 0;
    top: 90px;
    width: 6px;
    height: 165px;
    border-radius: 3px;
    background: #dededf;
}

/* 任务栏 */
.taskbar {
    flex: none;
    display: flex;
    justify-content: space-between;
    height: 40px;
    border-bottom: 2px solid #1a2130;
    background: #262728;
    color: #fff;
}
.taskbar svg {
    stroke: none;
}
.tasks {
    display: flex;
    gap: 8px;
    padding-left: 5px;
}
.tasks button {
    width: 37px;
    height: 38px;
    padding-top: 5px;
    border-bottom: 2px solid transparent;
}
.tasks svg {
    width: 23px;
    height: 23px;
}
.tasks .open {
    border-color: #a9d8ee;
}
.tasks .active {
    width: 45px;
    margin: 0 -4px;
    background: #4d4f50;
}
.tray {
    display: flex;
    align-items: center;
    gap: 7px;
    padding-right: 15px;
}
.tray svg {
    width: 15px;
    height: 15px;
}
.two-lines {
    font-size: 11px;
    line-height: 16px;
    text-align: center;
    font-family: "Open Sans", "Noto Sans CJK SC", sans-serif;
}
.memory {
    margin-right: 6px;
}
.ime {
    font-size: 14px;
}
.clock {
    margin: 0 11px 0 3px;
}
.tray .notice {
    width: 24px;
    height: 24px;
    font-size: 12px;
}

/* 悬浮 */
.todesk {
    position: absolute;
    left: 49px;
    top: 126px;
    width: 77px;
    height: 77px;
    border-radius: 50%;
    background: #f1f7fa;
    box-shadow: 0 0 2px #6f91b8;
}
.todesk svg {
    width: 46px;
    height: 40px;
    stroke: none;
}
.drawer {
    position: absolute;
    right: 0;
    top: 806px;
    width: 22px;
    height: 30px;
    border-radius: 15px 0 0 15px;
    background: #3b82f0;
    color: #fff;
}
```
